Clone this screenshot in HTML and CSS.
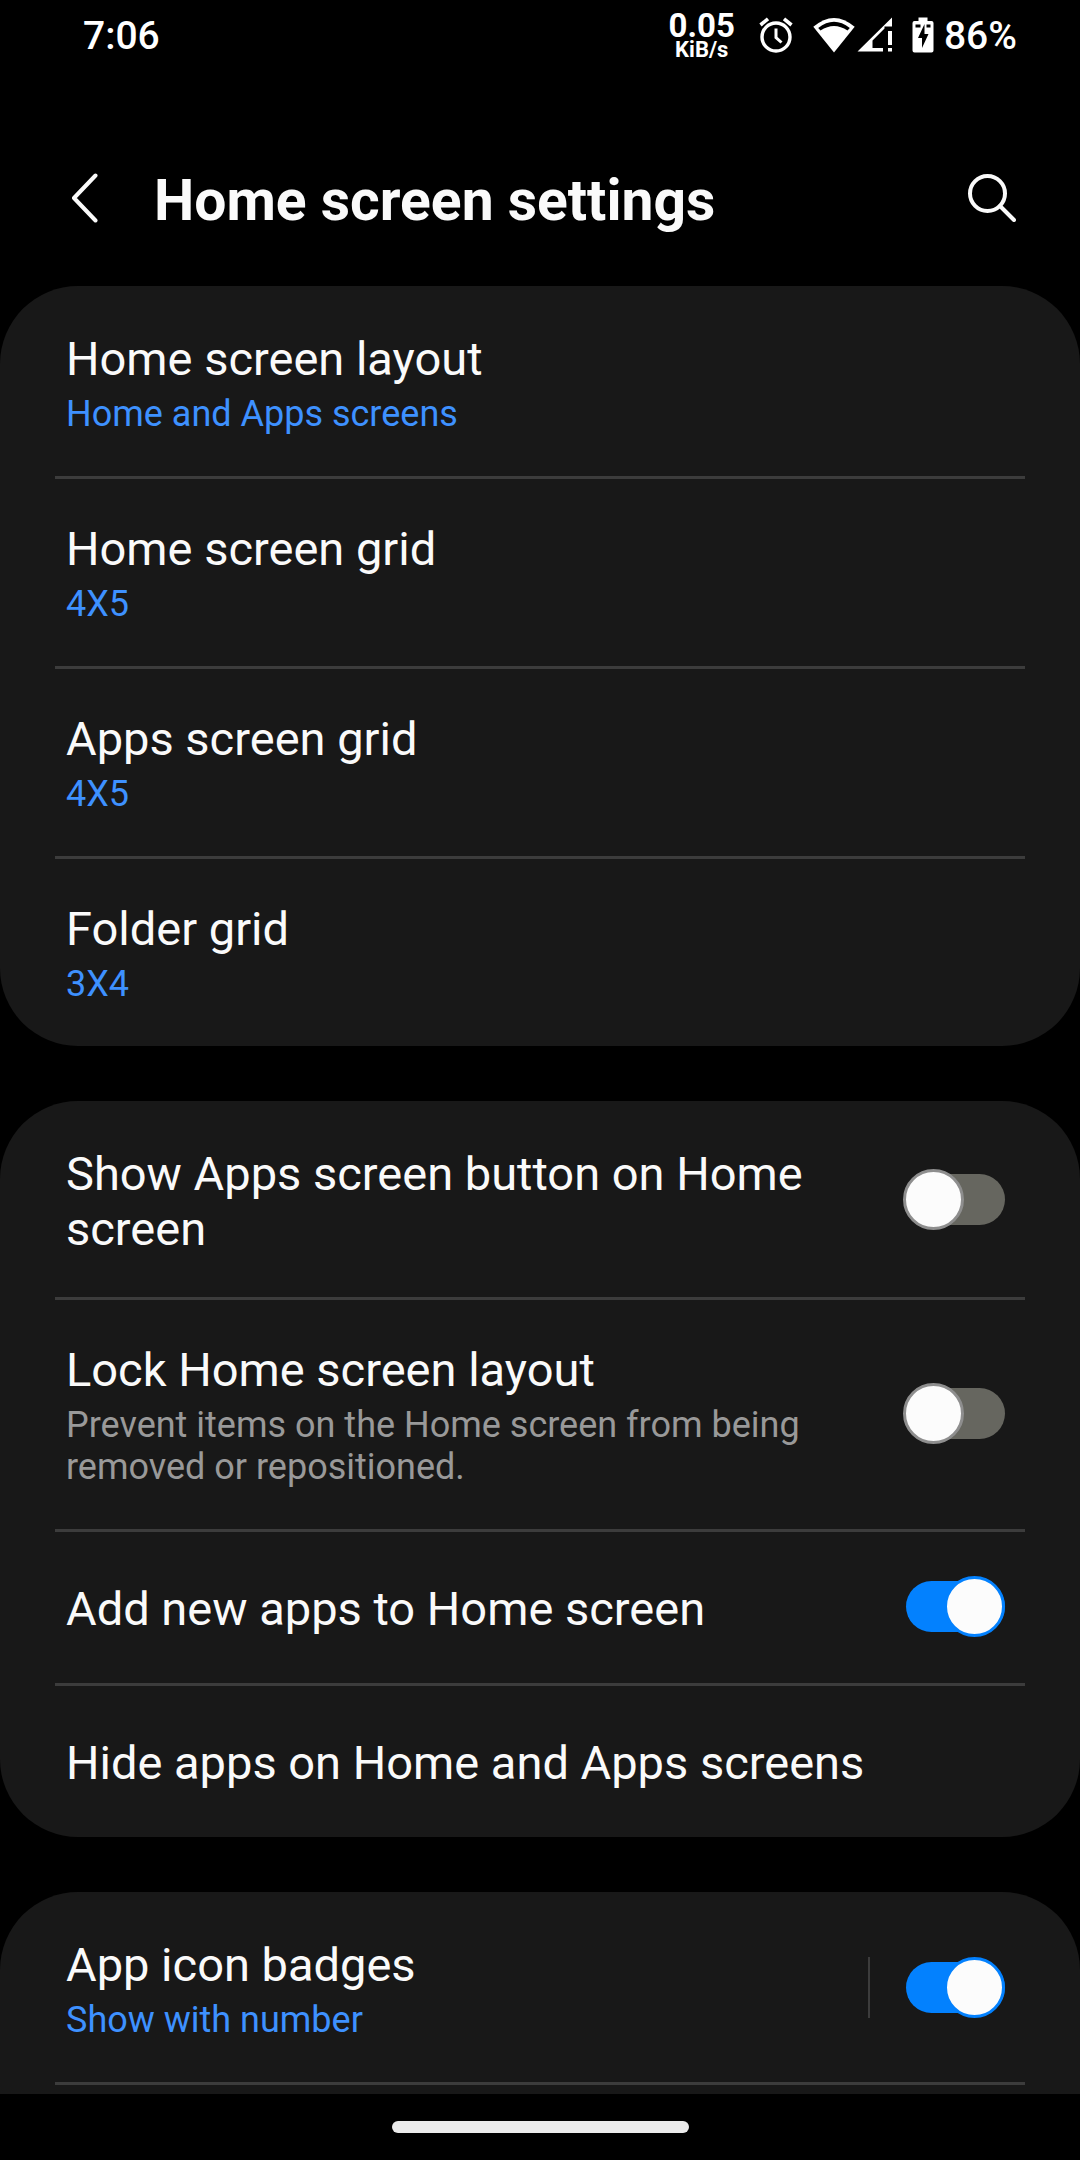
FILE: index.html
```html
<!DOCTYPE html>
<html lang="en">
<head>
<meta charset="utf-8">
<meta name="viewport" content="width=device-width, initial-scale=1">
<title>Home screen settings</title>
<link rel="stylesheet" href="styles.css">
</head>
<body>
<div class="status-bar">
  <span class="clock">7:06</span>
  <div class="status-icons">
    <div class="net-speed"><span class="net-value">0.05</span><span class="net-unit">KiB/s</span></div>
    <svg class="icon-alarm" viewBox="0 0 34 36" aria-hidden="true">
      <g fill="none" stroke="#fff">
        <circle cx="17" cy="20" r="14" stroke-width="3.4"/>
        <path d="M17 11.500V20.500L22.500 25.500" stroke-width="3"/>
        <path d="M1.500 8L9 1.800M32.500 8L25 1.800" stroke-width="3.600"/>
      </g>
    </svg>
    <svg class="icon-wifi" viewBox="0 0 42 36" aria-hidden="true">
      <path d="M.3 9.800Q21-8 41.700 9.800L21 35.500Z" fill="#fff"/>
      <path d="M5.200 11Q21-1.500 36.800 11L34.500 13.600Q21 4.500 7.500 13.600Z" fill="#000"/>
    </svg>
    <svg class="icon-signal" viewBox="0 0 36 36" aria-hidden="true">
      <path fill="#fff" fill-rule="evenodd" d="M35 .5V9.500H27.500V11.500L15.500 23.500V31H26V34.500H.5ZM31 14H35V28H31ZM31 31H35V34.500H31Z"/>
    </svg>
    <svg class="icon-battery" viewBox="0 0 22 36" aria-hidden="true">
      <path fill="#fff" d="M6.500 .5H15.500V4H19.500Q21.500 4 21.500 6V33.500Q21.500 35.500 19.500 35.500H2.500Q.5 35.500 .5 33.500V6Q.5 4 2.500 4H6.500Z"/>
      <path d="M3.500 7.500H8.500V10.500H3.500ZM14.500 7.500H18.500V10.500H14.500ZM12.500 7V17H16.500L10 31V21H6Z"/>
    </svg>
    <span class="battery-level">86%</span>
  </div>
</div>

<header class="app-bar">
  <button class="icon-button" type="button" aria-label="Navigate up">
    <svg class="icon-back" viewBox="0 0 27 50" aria-hidden="true"><path d="M24.500 2.500L3 25L24.500 47.500" fill="none" stroke="#fafafa" stroke-width="4" stroke-linecap="round" stroke-linejoin="round"/></svg>
  </button>
  <h1 class="page-title">Home screen settings</h1>
  <button class="icon-button" type="button" aria-label="Search">
    <svg class="icon-search" viewBox="0 0 48 48" aria-hidden="true"><g fill="none" stroke="#fafafa" stroke-width="4" stroke-linecap="round"><circle cx="19.500" cy="19.500" r="17.500"/><path d="M32 32L46 46"/></g></svg>
  </button>
</header>

<main class="settings">
  <section class="card">
    <button class="row" type="button"><span class="text"><span class="label">Home screen layout</span><span class="value">Home and Apps screens</span></span></button>
    <button class="row" type="button"><span class="text"><span class="label">Home screen grid</span><span class="value">4X5</span></span></button>
    <button class="row" type="button"><span class="text"><span class="label">Apps screen grid</span><span class="value">4X5</span></span></button>
    <button class="row" type="button"><span class="text"><span class="label">Folder grid</span><span class="value">3X4</span></span></button>
  </section>

  <section class="card">
    <label class="row"><span class="text"><span class="label">Show Apps screen button on Home screen</span></span><input class="switch" type="checkbox" role="switch"></label>
    <label class="row"><span class="text"><span class="label">Lock Home screen layout</span><span class="description">Prevent items on the Home screen from being removed or repositioned.</span></span><input class="switch" type="checkbox" role="switch"></label>
    <label class="row"><span class="text"><span class="label">Add new apps to Home screen</span></span><input class="switch" type="checkbox" role="switch" checked></label>
    <button class="row" type="button"><span class="text"><span class="label">Hide apps on Home and Apps screens</span></span></button>
  </section>

  <section class="card">
    <label class="row"><span class="text"><span class="label">App icon badges</span><span class="value">Show with number</span></span><span class="split"></span><input class="switch" type="checkbox" role="switch" checked></label>
    <div class="row"></div>
  </section>
</main>

<nav class="gesture-bar"><span class="gesture-handle"></span></nav>
</body>
</html>
```
FILE: styles.css
```css
*,
*::before,
*::after {
  box-sizing: border-box;
}

body {
  margin: 0;
  height: 100vh;
  display: flex;
  flex-direction: column;
  background: #000;
  color: #fafafa;
  font-family: Roboto, sans-serif;
}

button {
  margin: 0;
  padding: 0;
  border: 0;
  background: none;
  color: inherit;
  font: inherit;
  text-align: left;
}

svg {
  display: block;
  flex: none;
}

/* Status bar */
.status-bar {
  flex: none;
  display: flex;
  justify-content: space-between;
  align-items: center;
  height: 72px;
  padding: 0 63px 0 83px;
  color: #fff;
  font-size: 39px;
  font-weight: 500;
}

.status-icons {
  display: flex;
  align-items: center;
}

.status-icons svg {
  height: 36px;
  margin-bottom: 3px;
}

.net-speed {
  display: flex;
  flex-direction: column;
  align-items: center;
  margin-right: 24px;
  font-weight: 700;
}

.net-value {
  font-size: 33px;
  line-height: 26px;
}

.net-unit {
  font-size: 22px;
  line-height: 21px;
}

.icon-alarm {
  width: 34px;
  margin-right: 20px;
}

.icon-wifi {
  width: 42px;
  margin-right: 2px;
}

.icon-signal {
  width: 36px;
  margin-right: 19px;
}

.icon-battery {
  width: 22px;
  margin-right: 10px;
}

/* Title bar */
.app-bar {
  flex: none;
  display: flex;
  align-items: center;
  height: 214px;
  padding: 38px 64px 0 71px;
}

.icon-back {
  width: 27px;
  height: 50px;
}

.icon-search {
  width: 48px;
  height: 48px;
}

.page-title {
  flex: 1;
  margin: 0 0 0 56px;
  padding-top: 4px;
  font-size: 57px;
  font-weight: 700;
}

/* Setting groups */
.settings {
  flex: 1;
  min-height: 0;
  overflow: hidden;
  display: flex;
  flex-direction: column;
  gap: 55px;
}

.card {
  flex: none;
  padding: 0 55px;
  border-radius: 78px;
  background: #181818;
}

.row {
  display: flex;
  align-items: center;
  width: 100%;
  min-height: 154px;
  padding: 0 20px 0 11px;
}

.row + .row {
  box-shadow: inset 0 3px #3c3c3c;
}

.text {
  flex: 1;
  display: flex;
  flex-direction: column;
  padding: 45px 60px 41px 0;
}

.label {
  font-size: 47px;
  line-height: 55px;
}

.value,
.description {
  font-size: 36px;
  line-height: 42px;
  padding-top: 7px;
}

.value {
  color: #3e91ff;
}

.description {
  color: #999;
}

.split {
  width: 2px;
  height: 61px;
  margin-right: 33px;
  background: #3c3c3c;
}

/* Switch: the thumb is taller than the track and overhangs its left end when off */
.switch {
  appearance: none;
  flex: none;
  position: relative;
  width: 102px;
  height: 61px;
  margin: 0;
}

.switch::before {
  content: "";
  position: absolute;
  inset: 5px 0 5px 3px;
  border-radius: 26px;
  background: #66665f;
}

.switch::after {
  content: "";
  position: absolute;
  top: 0;
  left: 0;
  width: 61px;
  height: 61px;
  border: 3px solid #8e8e8e;
  border-radius: 50%;
  background: #fcfcfc;
}

.switch:checked::before {
  background: #0381fe;
}

.switch:checked::after {
  left: auto;
  right: 0;
  border-color: #0381fe;
}

/* Gesture navigation */
.gesture-bar {
  flex: none;
  display: flex;
  justify-content: center;
  align-items: center;
  height: 66px;
}

.gesture-handle {
  width: 297px;
  height: 12px;
  border-radius: 6px;
  background: #ebebeb;
}
```
